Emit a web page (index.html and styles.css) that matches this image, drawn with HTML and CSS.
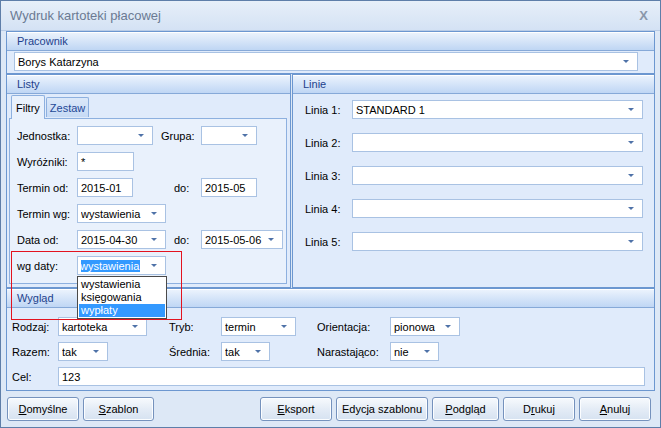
FILE: index.html
```html
<!DOCTYPE html>
<html lang="pl">
<head>
<meta charset="utf-8">
<title>Wydruk kartoteki płacowej</title>
<link rel="stylesheet" href="styles.css">
</head>
<body>
<div class="window">
  <div class="titlebar"><span class="title">Wydruk kartoteki płacowej</span><span class="close">X</span></div>
  <div class="body">
    <section class="group g-pracownik">
      <div class="ghead">Pracownik</div>
      <div class="p-body">
        <div class="combo w-prac"><span class="val">Borys Katarzyna</span><i class="arr"></i></div>
      </div>
    </section>
    <div class="mid">
      <section class="group g-listy">
        <div class="ghead">Listy</div>
        <div class="listy-body">
          <div class="tabs">
            <div class="tab active">Filtry</div>
            <div class="tab">Zestaw</div>
          </div>
          <div class="tabpanel">
            <span class="lbl">Jednostka:</span>
            <div class="combo w76"><span class="val"></span><i class="arr"></i></div>
            <span class="lbl c34">Grupa:</span>
            <div class="combo w56"><span class="val"></span><i class="arr"></i></div>

            <span class="lbl">Wyróżniki:</span>
            <div class="input w57">*</div>
            <span class="c345"></span>

            <span class="lbl">Termin od:</span>
            <div class="input w56">2015-01</div>
            <span class="lbl c4">do:</span>
            <div class="input w56">2015-05</div>

            <span class="lbl">Termin wg:</span>
            <div class="combo w89"><span class="val">wystawienia</span><i class="arr"></i></div>
            <span class="c345"></span>

            <span class="lbl">Data od:</span>
            <div class="combo w89"><span class="val">2015-04-30</span><i class="arr"></i></div>
            <span class="lbl c4">do:</span>
            <div class="combo w82"><span class="val">2015-05-06</span><i class="arr"></i></div>

            <span class="lbl">wg daty:</span>
            <div class="combo w89"><span class="val"><span class="sel">wystawienia</span></span><i class="arr"></i></div>
            <span class="c345"></span>
          </div>
        </div>
      </section>
      <section class="group g-linie">
        <div class="ghead">Linie</div>
        <div class="linie-body">
          <div class="lrow"><span class="llbl">Linia 1:</span><div class="combo w291"><span class="val">STANDARD 1</span><i class="arr"></i></div></div>
          <div class="lrow"><span class="llbl">Linia 2:</span><div class="combo w291"><span class="val"></span><i class="arr"></i></div></div>
          <div class="lrow"><span class="llbl">Linia 3:</span><div class="combo w291"><span class="val"></span><i class="arr"></i></div></div>
          <div class="lrow"><span class="llbl">Linia 4:</span><div class="combo w291"><span class="val"></span><i class="arr"></i></div></div>
          <div class="lrow"><span class="llbl">Linia 5:</span><div class="combo w291"><span class="val"></span><i class="arr"></i></div></div>
        </div>
      </section>
    </div>
    <section class="group g-wyglad">
      <div class="ghead">Wygląd</div>
      <div class="wyglad-body">
        <span class="lbl">Rodzaj:</span>
        <div class="combo w89"><span class="val">kartoteka</span><i class="arr"></i></div>
        <span class="lbl">Tryb:</span>
        <div class="combo w75"><span class="val">termin</span><i class="arr"></i></div>
        <span class="lbl">Orientacja:</span>
        <div class="combo w70"><span class="val">pionowa</span><i class="arr"></i></div>

        <span class="lbl">Razem:</span>
        <div class="combo w50"><span class="val">tak</span><i class="arr"></i></div>
        <span class="lbl">Średnia:</span>
        <div class="combo w49"><span class="val">tak</span><i class="arr"></i></div>
        <span class="lbl">Narastająco:</span>
        <div class="combo w49"><span class="val">nie</span><i class="arr"></i></div>

        <span class="lbl">Cel:</span>
        <div class="input cel">123</div>
      </div>
    </section>
    <div class="buttons">
      <button class="btn w72"><u>D</u>omyślne</button>
      <button class="btn w71"><u>S</u>zablon</button>
      <span class="spacer"></span>
      <button class="btn w72"><u>E</u>ksport</button>
      <button class="btn w92">Edycja szablonu</button>
      <button class="btn w67"><u>P</u>odgląd</button>
      <button class="btn w72">D<u>r</u>ukuj</button>
      <button class="btn w72"><u>A</u>nuluj</button>
    </div>
  </div>
  <ul class="popup">
    <li>wystawienia</li>
    <li>księgowania</li>
    <li class="hl">wypłaty</li>
  </ul>
  <div class="annot"></div>
</div>
</body>
</html>
```

FILE: styles.css
```css
* { box-sizing: border-box; }
html, body { margin: 0; padding: 0; }
body {
  font: 11px "Liberation Sans", Arial, sans-serif;
  color: #000;
  background: #fff;
}
.window {
  position: relative;
  width: 661px;
  height: 428px;
  border: 1px solid #5e7ea9;
  background: #dde8f6;
  display: flex;
  flex-direction: column;
}
.titlebar {
  height: 30px;
  flex: none;
  display: flex;
  align-items: center;
  justify-content: space-between;
  padding: 0 12px 0 9px;
  background: linear-gradient(#e7eff9, #d4e2f4);
  border-bottom: 1px solid #b9cce6;
}
.title { font-size: 13px; color: #6b7a93; }
.close { font-size: 13px; font-weight: bold; color: #8a97aa; }
.body {
  flex: 1;
  display: flex;
  flex-direction: column;
  padding: 0 5px;
}
.group {
  border: 1px solid #6c97d0;
  background: #e0ebfb;
  display: flex;
  flex-direction: column;
}
.ghead {
  height: 19px;
  flex: none;
  padding-left: 10px;
  display: flex;
  align-items: center;
  color: #1d3f8c;
  background: linear-gradient(#edf4fd, #bfd6f4);
  border-bottom: 1px solid #86a9d8;
  box-shadow: inset 0 1px #fff;
}
.g-pracownik { height: 43px; }
.p-body { padding: 1px 15px 2px 7px; }
.mid { display: flex; gap: 1px; height: 214px; flex: none; }
.g-listy { width: 285px; }
.g-linie { flex: 1; }
.g-wyglad { height: 103px; flex: none; }

/* inputs */
.combo, .input {
  height: 19px;
  background: #fff;
  border: 1px solid #a9c2e3;
  display: flex;
  align-items: center;
  padding-left: 3px;
  white-space: nowrap;
  font-size: 11px;
}
.combo .val { flex: 1; overflow: hidden; }
.arr {
  width: 0; height: 0;
  border-left: 3px solid transparent;
  border-right: 3px solid transparent;
  border-top: 3px solid #4f72a8;
  margin-right: 8px;
  flex: none;
}
.sel { background: #3399ff; color: #fff; padding: 0 1px; margin-left: -2px; }
.w-prac { width: 624px; }
.w291 { width: 291px; }
.w89 { width: 89px; }
.w82 { width: 82px; }
.w76 { width: 76px; }
.w75 { width: 75px; }
.w70 { width: 70px; }
.w57 { width: 57px; }
.w56 { width: 56px; }
.w50 { width: 50px; }
.w49 { width: 49px; }

/* Listy */
.listy-body {
  flex: 1;
  padding: 1px 3px 3px 2px;
  display: flex;
  flex-direction: column;
}
.tabs { height: 23px; display: flex; align-items: flex-end; padding-left: 2px; gap: 1px; }
.tab {
  height: 20px;
  padding: 0 3px;
  display: flex;
  align-items: center;
  border: 1px solid #8db0df;
  border-bottom: none;
  border-radius: 2px 2px 0 0;
  background: linear-gradient(#dbe8f9, #c6daf5);
  color: #1f4897;
  margin-bottom: 1px;
}
.tab.active {
  height: 24px;
  margin-bottom: -1px;
  background: #e9f1fc;
  color: #000;
  position: relative;
  z-index: 1;
  padding: 0 4px;
}
.tabpanel {
  height: 166px;
  border: 1px solid #8db0df;
  background: #e9f1fc;
  padding: 7px 0 0 7px;
  display: grid;
  grid-template-columns: 60px 84px 13px 27px 1fr;
  grid-auto-rows: 19px;
  row-gap: 7px;
  align-items: center;
}
.lbl { white-space: nowrap; }
.tabpanel .combo, .tabpanel .input { grid-column: 2; }
.tabpanel .c34 { grid-column: 3 / 5; }
.tabpanel .c4 { grid-column: 4; }
.tabpanel .c345 { grid-column: 3 / 6; }
.tabpanel .c34 + .combo,
.tabpanel .c4 + .combo,
.tabpanel .c4 + .input { grid-column: 5; }

/* Linie */
.linie-body {
  flex: 1;
  padding: 6px 0 0 12px;
  display: flex;
  flex-direction: column;
  gap: 14px;
}
.lrow { display: flex; align-items: center; }
.llbl { width: 47px; }

/* Wygląd */
.wyglad-body {
  padding: 9px 0 0 5px;
  display: grid;
  grid-template-columns: 46px 111px 52px 96px 73px 1fr;
  grid-auto-rows: 19px;
  row-gap: 6px;
  align-items: center;
}
.input.cel { grid-column: 2 / 7; width: 587px; }

/* Buttons */
.buttons {
  margin-top: 6px;
  height: 24px;
  display: flex;
  gap: 4px;
  padding: 0 4px 0 1px;
}
.spacer { flex: 1; }
.btn {
  height: 24px;
  font: 11px "Liberation Sans", Arial, sans-serif;
  color: #000;
  border: 1px solid #7592bd;
  border-radius: 3px;
  background: linear-gradient(#f7fafd, #e4ecf6 50%, #d6e2f1);
  padding: 0;
  box-shadow: inset 0 0 0 1px #fbfdff;
}
.w72 { width: 72px; }
.w71 { width: 71px; }
.w92 { width: 92px; }
.w67 { width: 67px; }

/* overlays */
.popup {
  position: absolute;
  left: 76px;
  top: 275px;
  width: 90px;
  margin: 0;
  padding: 1px;
  list-style: none;
  background: #fff;
  border: 1px solid #4a4a4a;
}
.popup li { height: 13px; line-height: 13px; padding-left: 2px; }
.popup li.hl { background: #3399ff; color: #fff; }
.annot {
  position: absolute;
  left: 10px;
  top: 250px;
  width: 171px;
  height: 69px;
  border: 1px solid #e3131f;
  z-index: 5;
}
```
